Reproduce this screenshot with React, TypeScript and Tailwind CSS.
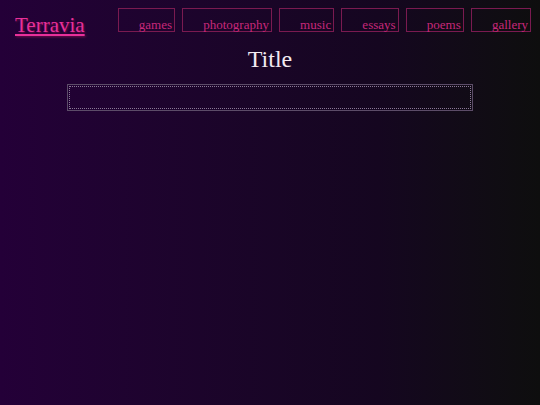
const links = ["games", "photography", "music", "essays", "poems", "gallery"];

const App = () => {
  return (
    <div className="min-h-screen w-full bg-gradient-to-r from-[#240038] via-[#150620] via-70% to-[#0e0e0e] font-['Liberation_Serif',serif]">
      <header className="flex items-start pt-2 pl-[15px] pr-[9px]">
        <a
          href="#"
          className="mt-[5px] text-[21px] leading-[25px] text-[#e8309a] underline [text-shadow:1px_1px_2px_#70104a]"
        >
          Terravia
        </a>
        <nav className="ml-auto flex gap-[7.2px]">
          {links.map((l) => (
            <a
              key={l}
              href="#"
              className="flex h-6 items-end border border-[#7a1a50] pl-5 pr-[2px] text-[13px] leading-[13px] text-[#c8287a]"
            >
              {l}
            </a>
          ))}
        </nav>
      </header>
      <h1 className="mt-[7px] text-center text-[24px] leading-[28px] text-[#f2eaf2]">
        Title
      </h1>
      <div className="mx-auto mt-[11px] w-[406px] border border-[#5c4c68] p-px">
        <div className="h-[23px] border border-dotted border-[#8a7896]" />
      </div>
    </div>
  );
};

export default App;
